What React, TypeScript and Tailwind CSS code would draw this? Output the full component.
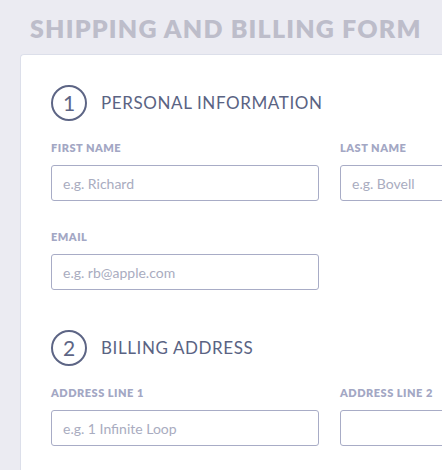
export default function App() {
  return (
    <div className="min-h-screen w-[442px] bg-[#ebebf2] overflow-hidden pl-5 pt-[14px]" style={{ fontFamily: 'Lato, "Open Sans", sans-serif' }}>
      <h1 className="pl-[10px] text-[25px] leading-[28px] font-extrabold tracking-[1.2px] text-[#bdbdca] whitespace-nowrap">
        SHIPPING AND BILLING FORM
      </h1>
      <div className="mt-3 w-[460px] bg-white rounded-tl-[4px] border-l border-t border-[#dcdfea] pl-[30px] pt-[30px] pb-10">
        <Section num="1" title="PERSONAL INFORMATION" />
        <div className="mt-[20px] flex gap-[21px]">
          <Field label="FIRST NAME" placeholder="e.g. Richard" />
          <Field label="LAST NAME" placeholder="e.g. Bovell" />
        </div>
        <div className="mt-[29px] flex gap-[21px]">
          <Field label="EMAIL" placeholder="e.g. rb@apple.com" />
        </div>
        <div className="mt-[40px]">
          <Section num="2" title="BILLING ADDRESS" />
        </div>
        <div className="mt-[20px] flex gap-[21px]">
          <Field label="ADDRESS LINE 1" placeholder="e.g. 1 Infinite Loop" />
          <Field label="ADDRESS LINE 2" placeholder="" />
        </div>
      </div>
    </div>
  );
}

function Section({ num, title }: { num: string; title: string }) {
  return (
    <div className="flex items-center gap-[14px]">
      <div className="w-9 h-9 rounded-full border-2 border-[#5d6585] flex items-center justify-center text-[21px] text-[#5d6585] leading-none pb-[1px]">
        {num}
      </div>
      <div className="text-[17px] tracking-[0.6px] text-[#5a6383] font-normal">{title}</div>
    </div>
  );
}

function Field({ label, placeholder }: { label: string; placeholder: string }) {
  return (
    <div className="w-[268px] shrink-0">
      <div className="text-[11px] font-extrabold tracking-[0.5px] text-[#a3a7c4] leading-[14px]">{label}</div>
      <input
        placeholder={placeholder}
        className="mt-[10px] w-full h-[36px] rounded-[3px] border border-[#a8acc6] px-[11px] text-[14px] text-[#5a6383] placeholder:text-[#a9acc0] outline-none"
      />
    </div>
  );
}
